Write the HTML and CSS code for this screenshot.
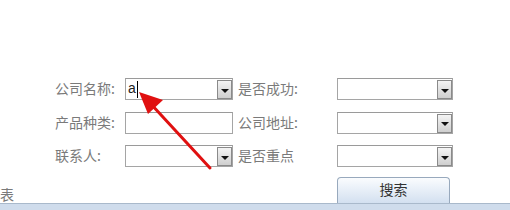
FILE: index.html
```html
<!DOCTYPE html>
<html>
<head>
<meta charset="utf-8">
<link rel="stylesheet" href="styles.css">
</head>
<body>
<div class="page">
  <div class="form">
    <div class="label">公司名称:</div>
    <div class="field"><span class="val">a</span><span class="caret"></span><span class="btn"><span class="tri"></span></span></div>
    <div class="label l2">是否成功:</div>
    <div class="field f2"><span class="btn"><span class="tri"></span></span></div>

    <div class="label">产品种类:</div>
    <div class="field"></div>
    <div class="label l2">公司地址:</div>
    <div class="field f2"><span class="btn"><span class="tri"></span></span></div>

    <div class="label">联系人:</div>
    <div class="field"><span class="btn"><span class="tri"></span></span></div>
    <div class="label l2">是否重点</div>
    <div class="field f2"><span class="btn"><span class="tri"></span></span></div>
  </div>
  <div class="bottom">
    <div class="title">表</div>
    <div class="search">搜索</div>
  </div>
  <div class="bar"></div>
  <svg class="arrow" width="510" height="210" viewBox="0 0 510 210">
    <line x1="210" y1="168" x2="150" y2="103" stroke="#e01010" stroke-width="3" stroke-linecap="round"/>
    <polygon points="139,92 163,100 148,114" fill="#e01010"/>
  </svg>
</div>
</body>
</html>
```
FILE: styles.css
```css
html, body { margin: 0; padding: 0; background: #fff; }
.page {
  width: 510px; height: 210px; position: relative; overflow: hidden;
  font-family: "Noto Sans CJK SC", "Microsoft YaHei", sans-serif;
  display: flex; flex-direction: column;
}
.form {
  display: grid;
  grid-template-columns: 70px 108px 104px 116px;
  grid-auto-rows: 22px;
  row-gap: 11.5px;
  padding: 78px 0 0 55px;
}
.label {
  font-size: 14px; color: #7a7a7a; line-height: 20px;
}
.l2 { padding-left: 5px; }
.field {
  box-sizing: border-box; height: 22px;
  border: 1px solid #a5a5a5; border-top-color: #9a9a9a;
  background: #fff; display: flex; align-items: stretch; position: relative;
}
.val {
  font-family: "Liberation Sans", Arial, sans-serif; font-size: 14px; color: #222;
  line-height: 19px; padding-left: 2px;
}
.caret { width: 1px; background: #000; margin: 2px 0 1px 1px; }
.btn {
  margin-left: auto; width: 15px; box-sizing: border-box;
  border: 1px solid #8a8a8a; background: linear-gradient(#f4f4f4, #cfcfcf);
  display: flex; align-items: center; justify-content: center;
  margin-top: 1px;
}
.tri {
  width: 0; height: 0;
  border-left: 4px solid transparent; border-right: 4px solid transparent;
  border-top: 4px solid #111; margin-top: 2px;
}
.bottom {
  display: flex; justify-content: space-between; align-items: flex-end;
  margin-top: 10px; height: 26px;
}
.title { font-size: 14px; color: #7a7a7a; line-height: 18px; }
.search {
  width: 113px; height: 26px; box-sizing: border-box; margin-right: 60px;
  border: 1px solid #98a9bd; border-bottom: none; border-radius: 4px 4px 0 0;
  background: linear-gradient(#fafcfe, #d3e0f0);
  font-size: 14px; color: #333; text-align: center; line-height: 22px;
}
.bar { height: 6px; background: #cfdcec; border-top: 1px solid #a9b9cb; }
.arrow { position: absolute; left: 0; top: 0; }
```
